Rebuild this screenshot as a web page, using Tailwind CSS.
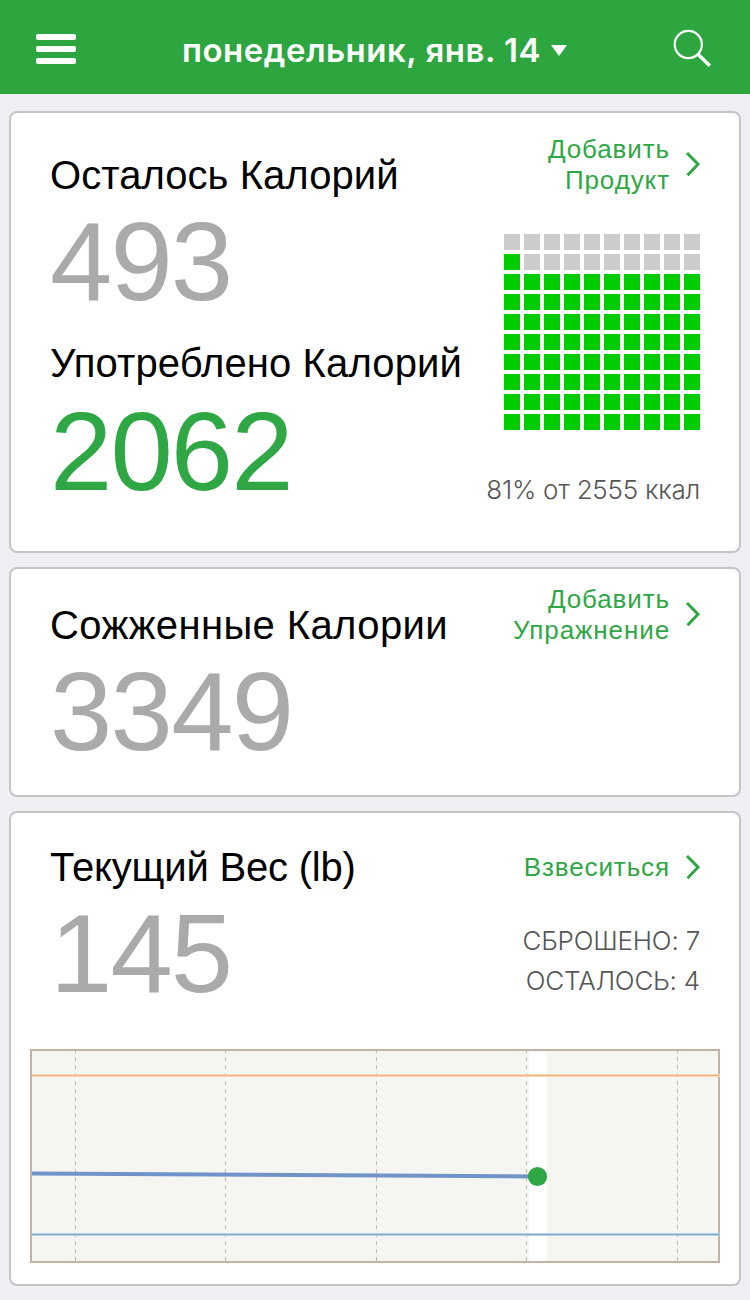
<!DOCTYPE html>
<html lang="ru">
<head>
  <meta charset="UTF-8" />
  <meta name="viewport" content="width=device-width, initial-scale=1.0" />
  <title>Дневник калорий</title>
  <script src="https://cdn.jsdelivr.net/npm/@tailwindcss/browser@4"></script>
</head>
<body class="bg-[#efeff4] font-['Liberation_Sans',Arial,sans-serif] text-black w-[750px] h-[1300px] overflow-hidden">

  <header class="bg-[#2da640] text-white h-[94px] pl-9 pr-[37px] pt-1 flex items-center justify-between">
    <button class="flex flex-col gap-1.5 w-10">
      <span class="h-1.5 rounded-[2px] bg-white"></span>
      <span class="h-1.5 rounded-[2px] bg-white"></span>
      <span class="h-1.5 rounded-[2px] bg-white"></span>
    </button>
    <button class="flex items-center gap-2.5 pt-0.5">
      <span class="font-['Inter',sans-serif] font-semibold text-[33px] leading-10 tracking-[0.5px] whitespace-nowrap">понедельник, янв. 14</span>
      <svg class="w-4 h-[11px]" viewBox="0 0 16 11"><path d="M0 0h16L8 11z" fill="#fff"/></svg>
    </button>
    <button>
      <svg class="w-10 h-10" viewBox="0 0 40 40" fill="none" stroke="#fff">
        <circle cx="15.3" cy="15.5" r="13.6" stroke-width="2.2"/>
        <path d="M25 25.2l11.8 11.5" stroke-width="3.4"/>
      </svg>
    </button>
  </header>

  <main class="px-[9px] pt-[17px] flex flex-col gap-3.5">

    <!-- Калории: остаток и употреблено -->
    <section class="h-[442px] bg-white border-2 border-[#c4c4c8] rounded-lg px-[39px] flex justify-between">
      <div class="pt-[38px] whitespace-nowrap">
        <h2 class="text-[40px] leading-[48px] tracking-[0.05px]">Осталось Калорий</h2>
        <p class="mt-[7px] text-[112px] leading-[112px] tracking-[-1.9px] text-[#aaaaaa]">493</p>
        <h2 class="mt-[21px] text-[40px] leading-[48px] tracking-[0.12px]">Употреблено Калорий</h2>
        <p class="mt-[9px] text-[112px] leading-[112px] tracking-[-1.9px] text-[#2fa745]">2062</p>
      </div>
      <div class="pt-[21px] flex flex-col items-end whitespace-nowrap">
        <a href="#" class="flex items-center gap-[15px] text-[#2fa745] text-right">
          <span class="text-[26px] leading-[31px] tracking-[0.9px]">Добавить<br>Продукт</span>
          <svg class="w-[15px] h-[26px] -mt-0.5" viewBox="0 0 15 26" fill="none" stroke="currentColor" stroke-width="3"><path d="M2 2L13 13.2L2.5 24.3"/></svg>
        </a>
        <div id="grid" class="mt-[38px] grid grid-cols-10 gap-1 w-[196px]"></div>
        <p class="mt-11 font-['Inter',sans-serif] font-light text-[26px] leading-8 tracking-[-0.25px] text-[#555555]">81% от 2555 ккал</p>
      </div>
    </section>

    <!-- Сожженные калории -->
    <section class="h-[230px] bg-white border-2 border-[#c4c4c8] rounded-lg px-[39px] flex justify-between">
      <div class="pt-8 whitespace-nowrap">
        <h2 class="text-[40px] leading-[48px] tracking-[0.4px]">Сожженные Калории</h2>
        <p class="mt-[7px] text-[112px] leading-[112px] tracking-[-1.7px] text-[#aaaaaa]">3349</p>
      </div>
      <div class="pt-[15px] whitespace-nowrap">
        <a href="#" class="flex items-center gap-[15px] text-[#2fa745] text-right">
          <span class="text-[26px] leading-[31px] tracking-[0.9px]">Добавить<br>Упражнение</span>
          <svg class="w-[15px] h-[26px] -mt-0.5" viewBox="0 0 15 26" fill="none" stroke="currentColor" stroke-width="3"><path d="M2 2L13 13.2L2.5 24.3"/></svg>
        </a>
      </div>
    </section>

    <!-- Вес -->
    <section class="h-[475px] bg-white border-2 border-[#c4c4c8] rounded-lg px-[19px]">
      <div class="px-5 flex justify-between whitespace-nowrap">
        <div class="pt-[30px]">
          <h2 class="text-[40px] leading-[48px] tracking-[-0.2px]">Текущий Вес (lb)</h2>
          <p class="mt-[7px] text-[112px] leading-[112px] tracking-[-1.9px] text-[#aaaaaa]">145</p>
        </div>
        <div class="pt-[38px] flex flex-col items-end">
          <a href="#" class="flex items-center gap-[15px] text-[#2fa745]">
            <span class="pt-px text-[26px] leading-[31px] tracking-[0.9px]">Взвеситься</span>
            <svg class="w-[15px] h-[26px]" viewBox="0 0 15 26" fill="none" stroke="currentColor" stroke-width="3"><path d="M2 2L13 13.2L2.5 24.3"/></svg>
          </a>
          <p class="mt-[38px] font-['Inter',sans-serif] font-light text-[26px] leading-10 tracking-[-0.2px] text-[#555555] text-right">СБРОШЕНО: 7<br>ОСТАЛОСЬ: 4</p>
        </div>
      </div>

      <svg class="mt-[39px] w-[690px] h-[214px] block" viewBox="0 0 690 214" fill="none">
        <rect x="1" y="1" width="688" height="212" fill="#f5f5f1" stroke="#c4b3a4" stroke-width="2"/>
        <rect x="499" y="3" width="17.5" height="209" fill="#fff"/>
        <g stroke="#c2b8ae" stroke-width="1" stroke-dasharray="4.3 3.7" stroke-dashoffset="2">
          <path d="M45.5 2v210M195.5 2v210M346.5 2v210M496.5 2v210M647.5 2v210"/>
        </g>
        <path d="M2 26.5h688" stroke="#f8d6b6" stroke-width="3"/>
        <path d="M2 26.5h688" stroke="#f0b27c" stroke-width="1"/>
        <path d="M2 185.5h688" stroke="#b9d1e2" stroke-width="3"/>
        <path d="M2 185.5h688" stroke="#78acd4" stroke-width="1"/>
        <path d="M2 124.5L507 127.5" stroke="#7094c8" stroke-width="4"/>
        <circle cx="507.5" cy="127.5" r="9.6" fill="#2fa745"/>
      </svg>
    </section>

  </main>

  <script>
    // 10x10 клеток, закрашивается снизу вверх
    const percent = 81;
    const grid = document.getElementById('grid');
    for (let i = 0; i < 100; i++) {
      const row = 9 - Math.floor(i / 10);
      const cell = document.createElement('div');
      cell.className = row * 10 + (i % 10) < percent ? 'h-4 bg-[#00cd00]' : 'h-4 bg-[#cccccc]';
      grid.appendChild(cell);
    }
  </script>
</body>
</html>
